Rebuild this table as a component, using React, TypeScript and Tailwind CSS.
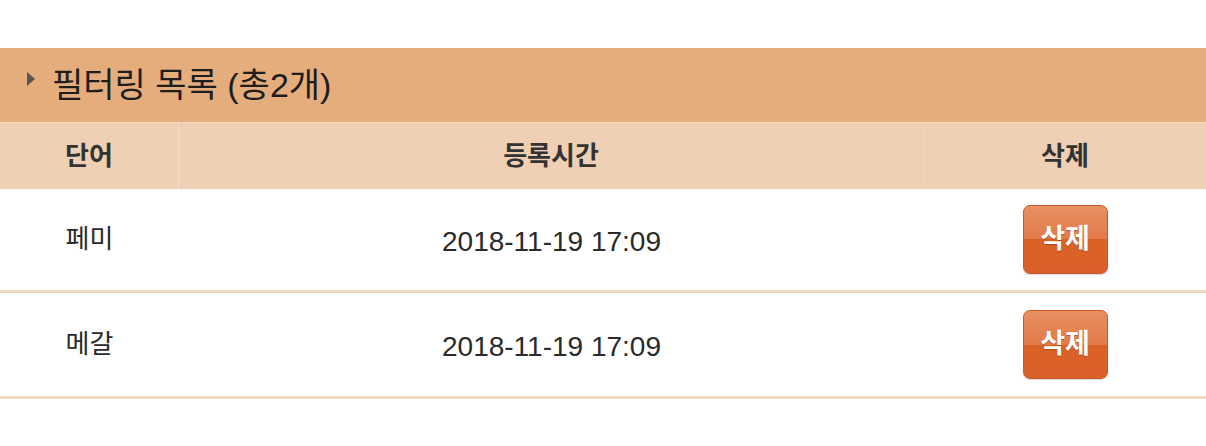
import React from "react";

const font = { fontFamily: '"Liberation Sans", "Noto Sans CJK KR", sans-serif' };

function DeleteButton() {
  return (
    <button
      className="relative w-[85px] h-[69px] rounded-[7px] border border-[#c9592a] overflow-hidden text-white font-bold text-[27px] bg-[linear-gradient(to_bottom,#e89062_0%,#e27a48_50%,#da6226_50%,#d9602a_100%)] shadow-[0_1px_1px_rgba(0,0,0,0.15)]"
      style={font}
    >
      <span className="relative [text-shadow:0_1px_1px_rgba(120,40,0,0.45)]">삭제</span>
    </button>
  );
}

const rows = [
  { word: "페미", time: "2018-11-19 17:09" },
  { word: "메갈", time: "2018-11-19 17:09" },
];

export default function App() {
  return (
    <div className="w-[1206px] h-[446px] bg-white" style={font}>
      <div className="h-[48px]" />
      <div className="h-[74px] bg-[#e5ac7c] flex items-center pl-[27px]">
        <svg width="8" height="14" viewBox="0 0 8 14" className="mr-[17px] mb-[12px]">
          <polygon points="0,0 8,7 0,14" fill="#565656" />
        </svg>
        <span className="text-[34px] text-[#1e1e1e] leading-none">필터링 목록 (총2개)</span>
      </div>
      <div className="h-[67px] bg-[#f0d0b4] border-t border-[#f2d8c0] flex text-[26px] font-bold text-[#333]">
        <div className="w-[179px] flex items-center justify-center border-r border-[#f4dcc6]">단어</div>
        <div className="w-[745px] flex items-center justify-center border-r border-[#f2d6be]">등록시간</div>
        <div className="flex-1 flex items-center justify-center">삭제</div>
      </div>
      {rows.map((r, i) => (
        <div
          key={i}
          className={`flex ${i === 0 ? "h-[104px]" : "h-[106px]"} border-b-[3px] border-[#f0d8c2] text-[26px] text-[#2a2a2a]`}
        >
          <div className="w-[179px] flex items-center justify-center">{r.word}</div>
          <div className="w-[745px] flex items-center justify-center pt-[4px] text-[28px]">{r.time}</div>
          <div className="flex-1 flex items-center justify-center">
            <DeleteButton />
          </div>
        </div>
      ))}
    </div>
  );
}
